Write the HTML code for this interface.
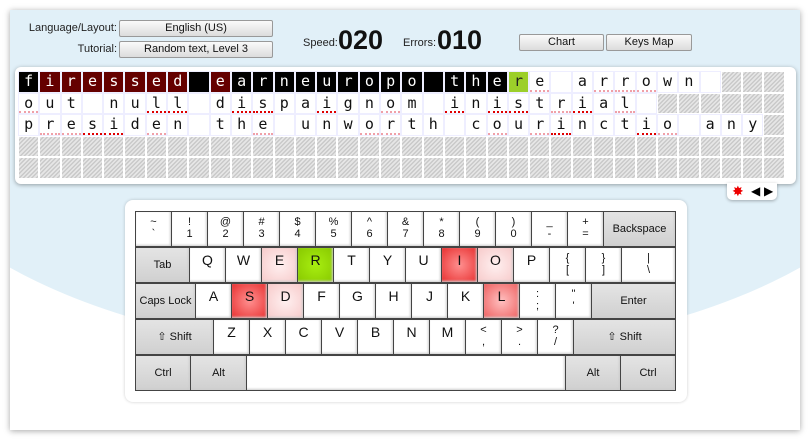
<!DOCTYPE html>
<html><head><meta charset="utf-8"><style>
*{box-sizing:border-box;margin:0;padding:0}
body{width:810px;height:440px;background:#fff;position:relative;overflow:hidden;font-family:"Liberation Sans",Arial,sans-serif}
#panel{position:absolute;left:10px;top:10px;width:790px;height:420px;background:#fff;box-shadow:0 1px 6px rgba(0,0,0,.35);overflow:hidden}
#blue{position:absolute;left:-125px;top:-155px;width:1040px;height:500px;border-radius:50%;background:#e1f0f8}
.lbl{position:absolute;font-size:11px;color:#222;text-align:right}
.btn{position:absolute;height:17px;border:1px solid #999;border-radius:2px;background:linear-gradient(#fafafa,#dcdcdc);font-size:11px;text-align:center;line-height:15px;color:#111}
.big{position:absolute;font-size:27px;font-weight:bold;color:#111;top:25px}
#text{position:absolute;left:15px;top:67px;width:781px;height:117px;background:#fff;border-radius:6px;box-shadow:0 1px 4px rgba(0,0,0,.35)}
.row{position:absolute;left:4px;height:20px;display:flex}
.row span{width:19.3px;height:19.5px;margin-right:2px;font-family:"DejaVu Sans Mono","Liberation Mono",monospace;font-size:15px;line-height:18px;text-align:center;color:#111;background:#fff;box-shadow:0 0 0 1px #eef}
.row span.k{background:#000;color:#fff}
.row span.d{background:#650000;color:#fff}
.row span.g{background:#9ccf2a;color:#222}
.row span.h{background:repeating-linear-gradient(135deg,#e6e6e6 0 1.5px,#c9c9c9 1.5px 3px);box-shadow:none}
.row span.a{background-image:linear-gradient(#fff,#fff);border-bottom:2px dotted #f0a0a8}
.row span.b{border-bottom:2px dotted #e00000}
#tab{position:absolute;left:727px;top:183px;width:50px;height:17px;background:#fff;border-radius:0 0 5px 5px;box-shadow:0 1px 3px rgba(0,0,0,.3);font-size:12px}
#kb{position:absolute;left:125px;top:200px;width:562px;height:202px;background:#fff;border-radius:8px;box-shadow:0 0 3px rgba(0,0,0,.2)}
.key{position:absolute;height:36px;background:#fff;border:1px solid #444;font-size:13px;color:#111;text-align:center;box-shadow:inset -1px -1px 2px #ccc}
.key.s{background:linear-gradient(#e4e4e4,#d0d0d0);font-size:11px;line-height:34px}
.key.l{line-height:24px;font-size:14px}
.key.n{font-size:11px;line-height:12px;padding-top:4px}
.key.n span{display:block}
.p1{background:radial-gradient(#fff0f0,#f7caca)!important}
.p2{background:radial-gradient(#ff9090,#e83030)!important}
.p3{background:radial-gradient(#ffc0c0,#ee6060)!important}
.gr{background:radial-gradient(#a8ee10,#88c800)!important}
</style></head><body>
<div id="panel"><div id="blue"></div></div>
<div class="lbl" style="left:20px;top:22px;width:97px">Language/Layout:</div>
<div class="lbl" style="left:20px;top:43px;width:97px">Tutorial:</div>
<div class="btn" style="left:119px;top:20px;width:154px">English (US)</div>
<div class="btn" style="left:119px;top:41px;width:154px">Random text, Level 3</div>
<div class="lbl" style="left:303px;top:37px">Speed:</div><div class="big" style="left:338px">020</div>
<div class="lbl" style="left:403px;top:37px">Errors:</div><div class="big" style="left:437px">010</div>
<div class="btn" style="left:519px;top:34px;width:85px">Chart</div>
<div class="btn" style="left:606px;top:34px;width:86px">Keys Map</div>

<div id="text">
<div class="row" style="top:5px"><span class="k">f</span><span class="d">i</span><span class="d">r</span><span class="d">e</span><span class="d">s</span><span class="d">s</span><span class="d">e</span><span class="d">d</span><span class="k"></span><span class="d">e</span><span class="k">a</span><span class="k">r</span><span class="k">n</span><span class="k">e</span><span class="k">u</span><span class="k">r</span><span class="k">o</span><span class="k">p</span><span class="k">o</span><span class="k"></span><span class="k">t</span><span class="k">h</span><span class="k">e</span><span class="g">r</span><span class="a">e</span><span></span><span>a</span><span class="a">r</span><span class="a">r</span><span class="a">o</span><span>w</span><span>n</span><span></span><span class="h"></span><span class="h"></span><span class="h"></span></div>
<div class="row" style="top:26.5px"><span class="a">o</span><span>u</span><span>t</span><span></span><span>n</span><span>u</span><span class="b">l</span><span class="b">l</span><span></span><span>d</span><span class="b">i</span><span class="b">s</span><span>p</span><span>a</span><span class="b">i</span><span>g</span><span>n</span><span class="a">o</span><span>m</span><span></span><span class="b">i</span><span>n</span><span class="b">i</span><span class="b">s</span><span>t</span><span class="a">r</span><span class="b">i</span><span>a</span><span class="a">l</span><span></span><span class="h"></span><span class="h"></span><span class="h"></span><span class="h"></span><span class="h"></span><span class="h"></span></div>
<div class="row" style="top:48px"><span>p</span><span class="a">r</span><span class="a">e</span><span class="b">s</span><span class="b">i</span><span>d</span><span class="a">e</span><span>n</span><span></span><span>t</span><span>h</span><span class="a">e</span><span></span><span>u</span><span>n</span><span>w</span><span class="a">o</span><span class="a">r</span><span>t</span><span>h</span><span></span><span>c</span><span class="a">o</span><span>u</span><span class="a">r</span><span class="b">i</span><span>n</span><span>c</span><span>t</span><span class="b">i</span><span class="a">o</span><span></span><span>a</span><span>n</span><span>y</span><span class="h"></span></div>
<div class="row" style="top:69.5px"><span class="h"></span><span class="h"></span><span class="h"></span><span class="h"></span><span class="h"></span><span class="h"></span><span class="h"></span><span class="h"></span><span class="h"></span><span class="h"></span><span class="h"></span><span class="h"></span><span class="h"></span><span class="h"></span><span class="h"></span><span class="h"></span><span class="h"></span><span class="h"></span><span class="h"></span><span class="h"></span><span class="h"></span><span class="h"></span><span class="h"></span><span class="h"></span><span class="h"></span><span class="h"></span><span class="h"></span><span class="h"></span><span class="h"></span><span class="h"></span><span class="h"></span><span class="h"></span><span class="h"></span><span class="h"></span><span class="h"></span><span class="h"></span></div>
<div class="row" style="top:91px"><span class="h"></span><span class="h"></span><span class="h"></span><span class="h"></span><span class="h"></span><span class="h"></span><span class="h"></span><span class="h"></span><span class="h"></span><span class="h"></span><span class="h"></span><span class="h"></span><span class="h"></span><span class="h"></span><span class="h"></span><span class="h"></span><span class="h"></span><span class="h"></span><span class="h"></span><span class="h"></span><span class="h"></span><span class="h"></span><span class="h"></span><span class="h"></span><span class="h"></span><span class="h"></span><span class="h"></span><span class="h"></span><span class="h"></span><span class="h"></span><span class="h"></span><span class="h"></span><span class="h"></span><span class="h"></span><span class="h"></span><span class="h"></span></div>
</div>
<div id="tab"><span style="position:absolute;left:5px;top:0;color:#e00;font-size:14px">✸</span><span style="position:absolute;left:24px;top:1px">◀</span><span style="position:absolute;left:37px;top:1px">▶</span></div>

<div id="kb"></div>
<!-- row 1 -->
<div class="key n" style="left:135px;top:211px;width:37px"><span>~</span><span>`</span></div>
<div class="key n" style="left:171px;top:211px;width:37px"><span>!</span><span>1</span></div>
<div class="key n" style="left:207px;top:211px;width:37px"><span>@</span><span>2</span></div>
<div class="key n" style="left:243px;top:211px;width:37px"><span>#</span><span>3</span></div>
<div class="key n" style="left:279px;top:211px;width:37px"><span>$</span><span>4</span></div>
<div class="key n" style="left:315px;top:211px;width:37px"><span>%</span><span>5</span></div>
<div class="key n" style="left:351px;top:211px;width:37px"><span>^</span><span>6</span></div>
<div class="key n" style="left:387px;top:211px;width:37px"><span>&amp;</span><span>7</span></div>
<div class="key n" style="left:423px;top:211px;width:37px"><span>*</span><span>8</span></div>
<div class="key n" style="left:459px;top:211px;width:37px"><span>(</span><span>9</span></div>
<div class="key n" style="left:495px;top:211px;width:37px"><span>)</span><span>0</span></div>
<div class="key n" style="left:531px;top:211px;width:37px"><span>_</span><span>-</span></div>
<div class="key n" style="left:567px;top:211px;width:37px"><span>+</span><span>=</span></div>
<div class="key s" style="left:603px;top:211px;width:73px">Backspace</div>
<!-- row 2 -->
<div class="key s" style="left:135px;top:247px;width:55px">Tab</div>
<div class="key l" style="left:189px;top:247px;width:37px">Q</div>
<div class="key l" style="left:225px;top:247px;width:37px">W</div>
<div class="key l p1" style="left:261px;top:247px;width:37px">E</div>
<div class="key l gr" style="left:297px;top:247px;width:37px">R</div>
<div class="key l" style="left:333px;top:247px;width:37px">T</div>
<div class="key l" style="left:369px;top:247px;width:37px">Y</div>
<div class="key l" style="left:405px;top:247px;width:37px">U</div>
<div class="key l p2" style="left:441px;top:247px;width:37px">I</div>
<div class="key l p1" style="left:477px;top:247px;width:37px">O</div>
<div class="key l" style="left:513px;top:247px;width:37px">P</div>
<div class="key n" style="left:549px;top:247px;width:37px"><span>{</span><span>[</span></div>
<div class="key n" style="left:585px;top:247px;width:37px"><span>}</span><span>]</span></div>
<div class="key n" style="left:621px;top:247px;width:55px"><span>|</span><span>\</span></div>
<!-- row 3 -->
<div class="key s" style="left:135px;top:283px;width:61px">Caps Lock</div>
<div class="key l" style="left:195px;top:283px;width:37px">A</div>
<div class="key l p2" style="left:231px;top:283px;width:37px">S</div>
<div class="key l p1" style="left:267px;top:283px;width:37px">D</div>
<div class="key l" style="left:303px;top:283px;width:37px">F</div>
<div class="key l" style="left:339px;top:283px;width:37px">G</div>
<div class="key l" style="left:375px;top:283px;width:37px">H</div>
<div class="key l" style="left:411px;top:283px;width:37px">J</div>
<div class="key l" style="left:447px;top:283px;width:37px">K</div>
<div class="key l p3" style="left:483px;top:283px;width:37px">L</div>
<div class="key n" style="left:519px;top:283px;width:37px"><span>:</span><span>;</span></div>
<div class="key n" style="left:555px;top:283px;width:37px"><span>"</span><span>'</span></div>
<div class="key s" style="left:591px;top:283px;width:85px">Enter</div>
<!-- row 4 -->
<div class="key s" style="left:135px;top:319px;width:79px">⇧ Shift</div>
<div class="key l" style="left:213px;top:319px;width:37px">Z</div>
<div class="key l" style="left:249px;top:319px;width:37px">X</div>
<div class="key l" style="left:285px;top:319px;width:37px">C</div>
<div class="key l" style="left:321px;top:319px;width:37px">V</div>
<div class="key l" style="left:357px;top:319px;width:37px">B</div>
<div class="key l" style="left:393px;top:319px;width:37px">N</div>
<div class="key l" style="left:429px;top:319px;width:37px">M</div>
<div class="key n" style="left:465px;top:319px;width:37px"><span>&lt;</span><span>,</span></div>
<div class="key n" style="left:501px;top:319px;width:37px"><span>&gt;</span><span>.</span></div>
<div class="key n" style="left:537px;top:319px;width:37px"><span>?</span><span>/</span></div>
<div class="key s" style="left:573px;top:319px;width:103px">⇧ Shift</div>
<!-- row 5 -->
<div class="key s" style="left:135px;top:355px;width:56px">Ctrl</div>
<div class="key s" style="left:190px;top:355px;width:57px">Alt</div>
<div class="key" style="left:246px;top:355px;width:320px"></div>
<div class="key s" style="left:565px;top:355px;width:56px">Alt</div>
<div class="key s" style="left:620px;top:355px;width:56px">Ctrl</div>
</body></html>
